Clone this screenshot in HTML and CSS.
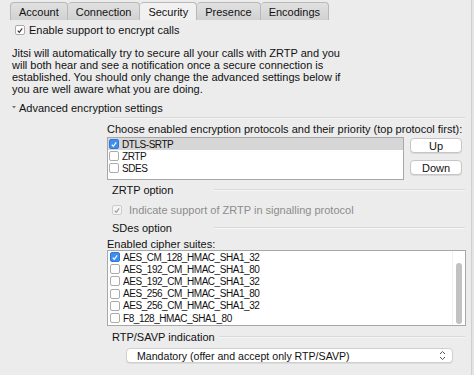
FILE: index.html
```html
<!DOCTYPE html>
<html lang="en">
<head>
    <meta charset="UTF-8">
    <title>Security</title>
    <link rel="stylesheet" href="styles.css">
</head>
<body>
<div class="window">
    <div class="tabs">
        <div class="tab">Account</div>
        <div class="tab">Connection</div>
        <div class="tab active">Security</div>
        <div class="tab">Presence</div>
        <div class="tab">Encodings</div>
    </div>

    <div class="content">
        <div class="check-row enable">
            <span class="box"><svg width="9" height="9" viewBox="0 0 9 9"><path d="M2 4.6 L3.7 6.6 L7 2.2" /></svg></span>
            Enable support to encrypt calls
        </div>

        <p class="intro">Jitsi will automatically try to secure all your calls with ZRTP and you<br>
        will both hear and see a notification once a secure connection is<br>
        established. You should only change the advanced settings below if<br>
        you are well aware what you are doing.</p>

        <div class="disclosure">
            <svg width="4" height="4" viewBox="0 0 4 4"><path d="M0 1 L4 1 L2 3.5 Z" /></svg>
            Advanced encryption settings
        </div>

        <div class="advanced">
            <div class="sep"></div>
            <div class="caption">Choose enabled encryption protocols and their priority (top protocol first):</div>

            <div class="proto-row">
                <div class="list protocols">
                    <div class="item selected">
                        <span class="box checked"><svg width="9" height="9" viewBox="0 0 9 9"><path d="M2 4.6 L3.7 6.6 L7 2.2" /></svg></span>DTLS-SRTP
                    </div>
                    <div class="item"><span class="box"></span>ZRTP</div>
                    <div class="item"><span class="box"></span>SDES</div>
                </div>
                <div class="buttons">
                    <button>Up</button>
                    <button>Down</button>
                </div>
            </div>

            <div class="group-title"><span>ZRTP option</span><div class="line"></div></div>
            <div class="check-row disabled">
                <span class="box"><svg width="9" height="9" viewBox="0 0 9 9"><path d="M2 4.6 L3.7 6.6 L7 2.2" /></svg></span>
                Indicate support of ZRTP in signalling protocol
            </div>

            <div class="group-title"><span>SDes option</span><div class="line"></div></div>
            <div class="caption cipher-caption">Enabled cipher suites:</div>
            <div class="list ciphers">
                <div class="item">
                    <span class="box checked"><svg width="9" height="9" viewBox="0 0 9 9"><path d="M2 4.6 L3.7 6.6 L7 2.2" /></svg></span>AES_CM_128_HMAC_SHA1_32
                </div>
                <div class="item"><span class="box"></span>AES_192_CM_HMAC_SHA1_80</div>
                <div class="item"><span class="box"></span>AES_192_CM_HMAC_SHA1_32</div>
                <div class="item"><span class="box"></span>AES_256_CM_HMAC_SHA1_80</div>
                <div class="item"><span class="box"></span>AES_256_CM_HMAC_SHA1_32</div>
                <div class="item"><span class="box"></span>F8_128_HMAC_SHA1_80</div>
                <div class="scrollbar"><div class="thumb"></div></div>
            </div>

            <div class="group-title"><span>RTP/SAVP indication</span><div class="line"></div></div>
            <div class="select">
                <span>Mandatory (offer and accept only RTP/SAVP)</span>
                <svg width="7" height="11" viewBox="0 0 7 11"><path d="M1 4 L3.5 1.5 L6 4 M1 7 L3.5 9.5 L6 7" /></svg>
            </div>
        </div>
    </div>
</div>
</body>
</html>
```

FILE: styles.css
```css
body {
    margin: 0;
    background-color: #e4e4e4;
    font-family: "Liberation Sans", Arial, sans-serif;
    font-size: 11px;
    color: #111;
}
.window {
    width: 471px;
    height: 375px;
    background-color: #ececec;
    border-right: 1px solid #d0d0d0;
    overflow: hidden;
}
.tabs {
    display: flex;
    padding: 2px 0 0 10px;
    height: 18px;
}
.tab {
    padding: 0 8px;
    line-height: 18px;
    border: 1px solid #b8b8b8;
    border-left: none;
    border-bottom: none;
    border-radius: 4px 4px 0 0;
    background: linear-gradient(#e1e1e1, #d1d1d1);
}
.tab:first-child {
    border-left: 1px solid #b8b8b8;
}
.tab.active {
    background: #f1f1f1;
}
.content {
    padding-left: 12px;
}
.box {
    display: inline-flex;
    align-items: center;
    justify-content: center;
    width: 10px;
    height: 10px;
    border: 1px solid #ababab;
    border-radius: 2px;
    background-color: #fff;
    box-sizing: border-box;
    flex-shrink: 0;
}
.box svg path {
    fill: none;
    stroke: #333;
    stroke-width: 1.3;
}
.box.checked {
    background-color: #3d8ef0;
    border-color: #3279d6;
}
.box.checked svg path {
    stroke: #fff;
}
.check-row {
    display: flex;
    align-items: center;
    gap: 4px;
    line-height: 12px;
}
.enable {
    margin-top: 4px;
    padding-left: 3px;
}
.intro {
    margin: 11px 0 0;
    line-height: 12px;
}
.disclosure {
    display: flex;
    align-items: center;
    gap: 3px;
    margin-top: 7px;
    line-height: 12px;
}
.disclosure svg {
    fill: #777;
    margin-bottom: 3px;
}
.advanced {
    margin-left: 95px;
    width: 359px;
}
.sep {
    margin: 3px 1px 0 3px;
    height: 1px;
    background-color: #d8d8d8;
    border-bottom: 1px solid #f6f6f6;
}
.caption {
    margin-top: 4px;
    line-height: 12px;
    white-space: nowrap;
}
.proto-row {
    display: flex;
    margin-top: 2px;
}
.list {
    background-color: #fff;
    border: 1px solid #a8a8a8;
    box-sizing: border-box;
    font-size: 10px;
    letter-spacing: -0.45px;
}
.protocols {
    width: 297px;
    height: 43px;
}
.item {
    display: flex;
    align-items: center;
    gap: 3px;
    height: 12px;
    padding-left: 1px;
}
.item.selected {
    background-color: #d6d6d6;
}
.buttons {
    display: flex;
    flex-direction: column;
    gap: 7px;
    margin: 1px 0 0 6px;
}
button {
    width: 52px;
    height: 15px;
    padding: 0;
    font-family: inherit;
    font-size: 11px;
    color: #111;
    background-color: #fff;
    border: 1px solid #c6c6c6;
    border-radius: 4px;
    box-shadow: 0 1px 0 #d8d8d8;
}
.group-title {
    display: flex;
    align-items: center;
    gap: 4px;
    padding-left: 5px;
    line-height: 12px;
}
.group-title span {
    min-width: 98px;
}
.group-title .line {
    flex: 1;
    height: 1px;
    margin-right: 1px;
    background-color: #d9d9d9;
    border-bottom: 1px solid #f6f6f6;
}
.advanced > .group-title {
    margin-top: 4px;
}
.disabled {
    margin-top: 8px;
    padding-left: 5px;
    gap: 7px;
    color: #8c8c8c;
}
.disabled .box {
    border-color: #cdcdcd;
    background-color: #f4f4f4;
}
.disabled .box svg path {
    stroke: #9a9a9a;
}
.disabled + .group-title {
    margin-top: 6px;
}
.cipher-caption {
    margin-top: 5px;
    line-height: 11px;
}
.ciphers {
    position: relative;
    height: 76px;
    overflow: hidden;
}
.ciphers .item {
    height: 12.2px;
    padding-left: 2px;
}
.scrollbar {
    position: absolute;
    top: 0;
    right: 0;
    bottom: 0;
    width: 12px;
    border-left: 1px solid #f0f0f0;
}
.thumb {
    position: absolute;
    top: 12px;
    bottom: 1px;
    left: 3px;
    width: 6px;
    border-radius: 3px;
    background-color: #c2c2c2;
}
.ciphers + .group-title {
    margin-top: 5px;
}
.select {
    display: flex;
    align-items: center;
    justify-content: space-between;
    margin: 5px 0 0 19px;
    width: 327px;
    height: 15px;
    padding: 0 6px 0 10px;
    box-sizing: border-box;
    background-color: #fff;
    border: 1px solid #cfcfcf;
    border-radius: 4px;
    box-shadow: 0 1px 0 #dcdcdc;
    font-size: 10.6px;
}
.select svg path {
    fill: none;
    stroke: #555;
    stroke-width: 1;
}
```
